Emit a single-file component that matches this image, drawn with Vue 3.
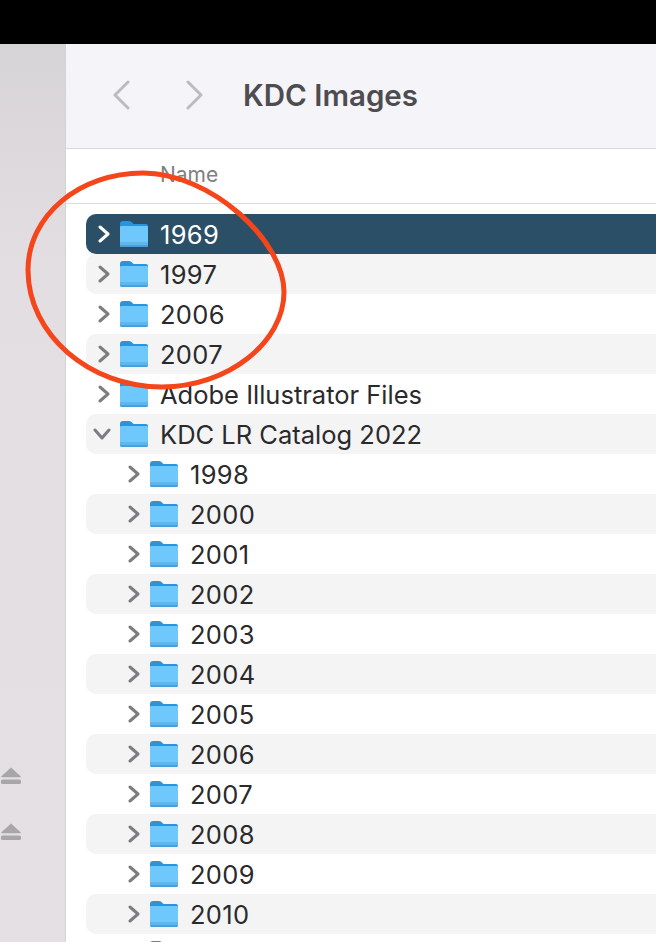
<script setup>
const rows = [
  { name: '1969', level: 0, selected: true },
  { name: '1997', level: 0 },
  { name: '2006', level: 0 },
  { name: '2007', level: 0 },
  { name: 'Adobe Illustrator Files', level: 0 },
  { name: 'KDC LR Catalog 2022', level: 0, open: true },
  ...['1998','2000','2001','2002','2003','2004','2005','2006','2007','2008','2009','2010',''].map(name => ({ name, level: 1 })),
]
</script>

<template>
  <div class="screen">
    <div class="topbar"></div>
    <div class="window">
      <aside class="sidebar">
        <svg class="eject" width="20" height="20" viewBox="0 0 20 20" v-for="n in 2" :key="n">
          <path d="M10 1.5 L19.6 10.2 Q20 11.2 19 11.2 L1 11.2 Q0 11.2 .4 10.2 Z" fill="#a8a6a9"/>
          <rect x="0" y="13.4" width="20" height="4.6" rx="1.6" fill="#a8a6a9"/>
        </svg>
      </aside>
      <main class="main">
        <header class="toolbar">
          <svg class="nav" width="20" height="30" viewBox="0 0 20 30"><path d="M17 2 L4 15 L17 28" /></svg>
          <svg class="nav nav-next" width="20" height="30" viewBox="0 0 20 30"><path d="M3 2 L16 15 L3 28" /></svg>
          <h1 class="title">KDC Images</h1>
        </header>
        <div class="colhead"><span>Name</span></div>
        <div class="list">
          <div v-for="(r, i) in rows" :key="i" class="row"
               :class="{ selected: r.selected, striped: !r.selected && i % 2 === 1, nested: r.level === 1 }">
            <svg class="chev" width="14" height="18" viewBox="0 0 14 18" v-if="!r.open">
              <path d="M3 2 L11 9 L3 16" />
            </svg>
            <svg class="chev chev-open" width="18" height="14" viewBox="0 0 18 14" v-else>
              <path d="M2 3 L9 11 L16 3" />
            </svg>
            <svg class="folder" width="30" height="28" viewBox="0 0 30 28">
              <path d="M1 4 Q1 1 4 1 L10 1 Q12 1 13.5 3 L14.5 4 L27 4 Q29 4 29 6 L29 9 L1 9 Z" fill="#2a93dc"/>
              <path d="M1 7 Q1 6 2 6 L28 6 Q29 6 29 7 L29 25 Q29 27 27 27 L3 27 Q1 27 1 25 Z" fill="#6ec8fb"/>
              <path d="M1 22 L29 22 L29 25 Q29 27 27 27 L3 27 Q1 27 1 25 Z" fill="#5fb6ee"/>
              <path d="M1 25 L29 25 Q29 27 27 27 L3 27 Q1 27 1 25 Z" fill="#4a9fd8"/>
            </svg>
            <span class="label" :class="{ num: /^\d+$/.test(r.name) }">{{ r.name }}</span>
          </div>
        </div>
      </main>
    </div>
    <svg class="ring" width="656" height="942" viewBox="0 0 656 942">
      <path d="M143 173 C80 173 28 215 28 270 C28 335 90 387 162 387 C228 387 284 342 284 292 C284 240 210 173 143 173 Z" />
    </svg>
  </div>
</template>

<style>
html, body { margin: 0; background: #000; }
</style>

<style scoped>
.screen {
  position: relative;
  width: 656px;
  height: 942px;
  overflow: hidden;
  display: flex;
  flex-direction: column;
  font-family: Inter, "Liberation Sans", sans-serif;
  color: #2a2a2c;
}
.topbar { height: 44px; flex: none; background: #000; }
.window { flex: 1; display: flex; min-height: 0; }
.sidebar {
  width: 66px;
  flex: none;
  box-sizing: border-box;
  border-right: 1px solid #d4d2d5;
  background: linear-gradient(180deg, #d7d4d7 0%, #e2dee2 25%, #e4e0e4 100%);
  padding-top: 722px;
  display: flex;
  flex-direction: column;
  gap: 36px;
}
.eject { display: block; margin-left: 1px; }
.main { flex: 1; min-width: 0; background: #fff; }
.toolbar {
  height: 105px;
  box-sizing: border-box;
  background: #f5f4f8;
  border-bottom: 1px solid #d9d8dc;
  display: flex;
  align-items: center;
  padding: 0 0 2px 45px;
}
.nav { fill: none; stroke: #bcbbbe; stroke-width: 3; stroke-linecap: round; stroke-linejoin: round; flex: none; }
.nav-next { margin-left: 54px; }
.title { margin: 0 0 0 38px; font-size: 29.5px; font-weight: 600; color: #4d4c50; }
.colhead {
  height: 55px;
  box-sizing: border-box;
  border-bottom: 1px solid #dcdcdc;
  padding: 0 0 4px 94px;
  display: flex;
  align-items: center;
  font-size: 21px;
  color: #808082;
}
.list { padding: 10px 0 0 20px; }
.row {
  height: 40px;
  display: flex;
  align-items: center;
  border-radius: 10px 0 0 10px;
  padding-left: 11px;
  font-size: 25.5px;
  white-space: nowrap;
}
.row.striped { background: #f4f4f4; }
.row.selected { background: #2c4f68; color: #fff; }
.row.nested { padding-left: 41px; }
.chev { flex: none; fill: none; stroke: #7d7d7f; stroke-width: 3; stroke-linecap: round; stroke-linejoin: round; }
.selected .chev { stroke: #fff; }
.chev-open { margin-left: -4px; }
.folder { flex: none; margin-left: 8px; }
.label { margin-left: 11px; }
.label.num { letter-spacing: .3px; }
.ring {
  position: absolute;
  left: 0;
  top: 0;
  pointer-events: none;
  fill: none;
  stroke: #f4451b;
  stroke-width: 5;
}
</style>
